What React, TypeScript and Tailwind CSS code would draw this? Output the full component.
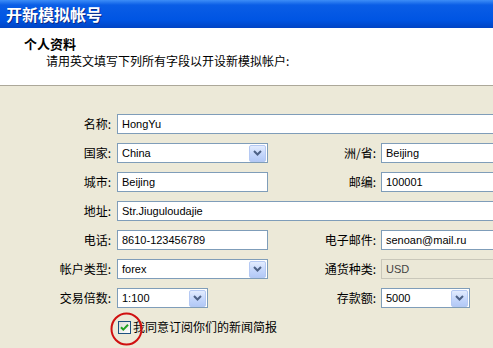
import React from 'react'

const cjk = '[font-family:"Noto_Sans_CJK_SC","Noto_Sans",sans-serif]'
const latin = '[font-family:"Liberation_Sans",Arial,sans-serif]'

function ComboButton() {
  return (
    <div className="ml-auto mr-[1px] flex h-[17px] w-[17px] items-center justify-center rounded-[2px] border border-[#B5C9F3] bg-[linear-gradient(to_bottom,#E3ECFE,#C4D6FB_55%,#B3C9F6)]">
      <svg width="9" height="6" viewBox="0 0 9 6">
        <path d="M1 1 L4.5 4.5 L8 1" fill="none" stroke="#4D6185" strokeWidth="2" />
      </svg>
    </div>
  )
}

function Field({ value, width, combo, disabled }: { value: string; width: string; combo?: boolean; disabled?: boolean }) {
  return (
    <div
      className={`flex h-[20px] shrink-0 items-center border ${width} ${
        disabled ? 'border-[#C9C7BA] bg-[#EBE8D7] text-[#444]' : 'border-[#7F9DB9] bg-white text-black'
      }`}
    >
      <span className={`${latin} pl-[4px] text-[11px] leading-none whitespace-nowrap`}>{value}</span>
      {combo && <ComboButton />}
    </div>
  )
}

function Label({ text, width }: { text: string; width: string }) {
  return (
    <span className={`${cjk} ${width} shrink-0 text-right text-[12px] leading-none text-black whitespace-nowrap`}>
      {text}
    </span>
  )
}

export default function App() {
  return (
    <div className="relative h-[348px] w-[493px] overflow-hidden bg-[#ECE9D8]">
      {/* title bar */}
      <div className="flex h-[28px] items-center bg-[linear-gradient(to_bottom,#3D8DF7,#0A5DE6_18%,#0055E3_70%,#0044C4)] pl-[6px]">
        <span className={`${cjk} text-[16px] font-bold text-white [text-shadow:1px_1px_0_#0B2A88]`}>开新模拟帐号</span>
      </div>

      {/* header */}
      <div className="h-[58px] border-b border-[#ACA899] bg-white pt-[8px]">
        <p className={`${cjk} ml-[24px] text-[13px] font-bold leading-[16px] text-black`}>个人资料</p>
        <p className={`${cjk} ml-[46px] mt-[1px] text-[12px] leading-[16px] text-black`}>请用英文填写下列所有字段以开设新模拟帐户:</p>
      </div>

      {/* form */}
      <div className="flex flex-col gap-[9px] pt-[28px]">
        <div className="flex items-center">
          <Label text="名称:" width="w-[111px]" />
          <div className="ml-[6px]"><Field value="HongYu" width="w-[400px]" /></div>
        </div>
        <div className="flex items-center">
          <Label text="国家:" width="w-[111px]" />
          <div className="ml-[6px]"><Field value="China" width="w-[151px]" combo /></div>
          <Label text="洲/省:" width="w-[108px]" />
          <div className="ml-[5px]"><Field value="Beijing" width="w-[140px]" /></div>
        </div>
        <div className="flex items-center">
          <Label text="城市:" width="w-[111px]" />
          <div className="ml-[6px]"><Field value="Beijing" width="w-[151px]" /></div>
          <Label text="邮编:" width="w-[108px]" />
          <div className="ml-[5px]"><Field value="100001" width="w-[140px]" /></div>
        </div>
        <div className="flex items-center">
          <Label text="地址:" width="w-[111px]" />
          <div className="ml-[6px]"><Field value="Str.Jiuguloudajie" width="w-[400px]" /></div>
        </div>
        <div className="flex items-center">
          <Label text="电话:" width="w-[111px]" />
          <div className="ml-[6px]"><Field value="8610-123456789" width="w-[151px]" /></div>
          <Label text="电子邮件:" width="w-[108px]" />
          <div className="ml-[5px]"><Field value="senoan@mail.ru" width="w-[140px]" /></div>
        </div>
        <div className="flex items-center">
          <Label text="帐户类型:" width="w-[111px]" />
          <div className="ml-[6px]"><Field value="forex" width="w-[151px]" combo /></div>
          <Label text="通货种类:" width="w-[108px]" />
          <div className="ml-[5px]"><Field value="USD" width="w-[140px]" disabled /></div>
        </div>
        <div className="flex items-center">
          <Label text="交易倍数:" width="w-[111px]" />
          <div className="ml-[6px]"><Field value="1:100" width="w-[91px]" combo /></div>
          <Label text="存款额:" width="w-[168px]" />
          <div className="ml-[5px]"><Field value="5000" width="w-[89px]" combo /></div>
        </div>
        <div className="flex h-[20px] items-center pl-[118px]">
          <div className="relative flex h-[13px] w-[13px] items-center justify-center border border-[#1C5180] bg-[linear-gradient(135deg,#DCDCD7,#FFFFFF)]">
            <svg width="9" height="9" viewBox="0 0 9 9">
              <path d="M1 4.2 L3.3 6.6 L8 1.8" fill="none" stroke="#21A121" strokeWidth="2" />
            </svg>
            <svg className="absolute left-[-9px] top-[-10px]" width="33" height="34" viewBox="0 0 33 34">
              <ellipse cx="16.5" cy="17" rx="15" ry="15.5" fill="none" stroke="#D01010" strokeWidth="2" />
            </svg>
          </div>
          <span className={`${cjk} ml-[2px] text-[12px] leading-none text-black`}>我同意订阅你们的新闻简报</span>
        </div>
      </div>
    </div>
  )
}
